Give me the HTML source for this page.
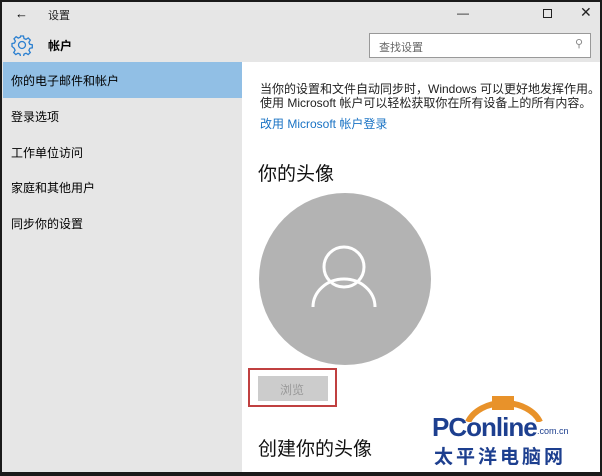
<!DOCTYPE html>
<html><head><meta charset="utf-8"><style>
*{margin:0;padding:0;box-sizing:border-box}
body{width:602px;height:476px;overflow:hidden;background:#1a1a1a;font-family:"Liberation Sans","Noto Sans CJK SC",sans-serif;position:relative}
#w{position:absolute;left:2px;top:2px;width:598px;height:470px;background:#fff;overflow:hidden}
#top{position:absolute;left:0;top:0;width:598px;height:60px;background:#e6e6e6}
#side{position:absolute;left:0;top:60px;width:240px;height:410px;background:#e6e6e6}
.t{position:absolute;font-size:12px;color:#000;white-space:nowrap}
.sel{position:absolute;left:1px;top:60px;width:239px;height:36px;background:#91bfe5}
#search{position:absolute;left:367px;top:31px;width:222px;height:25px;border:1px solid #999;background:#fff}
.c{font-size:12px;color:#222;line-height:16px}
</style></head><body>
<div id="w">
<div id="top"></div>
<div id="side"></div>
<div class="sel"></div>
<div class="t" style="left:13px;top:4px;font-size:13px">←</div>
<div class="t" style="left:46px;top:5px;font-size:11px;color:#222">设置</div>
<svg style="position:absolute;left:9px;top:32px" width="22" height="22" viewBox="0 0 22 22"><g fill="none" stroke="#2a7fd0" stroke-width="1.3"><circle cx="11" cy="11" r="3.5"/><path d="M9.5 2h3l.5 2.5 2 .9 2.2-1.4 2.1 2.1-1.4 2.2.9 2 2.5.5v3l-2.5.5-.9 2 1.4 2.2-2.1 2.1-2.2-1.4-2 .9-.5 2.5h-3l-.5-2.5-2-.9-2.2 1.4-2.1-2.1 1.4-2.2-.9-2L1 12.5v-3l2.5-.5.9-2L3 4.8 5.1 2.7l2.2 1.4 2-.9z"/></g></svg>
<div class="t" style="left:46px;top:35px;font-size:12px;font-weight:bold">帐户</div>
<div class="t" style="left:455px;top:4px;font-size:12px;color:#222">—</div>
<div style="position:absolute;left:541px;top:7px;width:9px;height:9px;border:1px solid #222"></div>
<div class="t" style="left:578px;top:2px;font-size:14px;color:#222">✕</div>
<div id="search"><span class="t" style="left:9px;top:5px;color:#666;font-size:11px">查找设置</span><span class="t" style="left:205px;top:3px;color:#888;font-size:11px">⚲</span></div>
<div class="t" style="left:9px;top:70px">你的电子邮件和帐户</div>
<div class="t" style="left:9px;top:106px">登录选项</div>
<div class="t" style="left:9px;top:142px">工作单位访问</div>
<div class="t" style="left:9px;top:177px">家庭和其他用户</div>
<div class="t" style="left:9px;top:213px">同步你的设置</div>
<div class="t c" style="left:258px;top:79px">当你的设置和文件自动同步时，Windows 可以更好地发挥作用。</div>
<div class="t c" style="left:258px;top:93px">使用 Microsoft 帐户可以轻松获取你在所有设备上的所有内容。</div>
<div class="t c" style="left:258px;top:114px;color:#1a73c4">改用 Microsoft 帐户登录</div>
<div class="t" style="left:256px;top:157px;font-size:19px;color:#111">你的头像</div>
<svg style="position:absolute;left:255px;top:189px" width="176" height="176" viewBox="0 0 176 176"><circle cx="88" cy="88" r="86" fill="#b3b3b3"/><g fill="none" stroke="#fff" stroke-width="3"><circle cx="87" cy="76" r="20"/><path d="M56 116a31 28 0 0 1 62 0"/></g></svg>
<div style="position:absolute;left:246px;top:366px;width:89px;height:39px;border:2px solid #c04040"></div>
<div style="position:absolute;left:256px;top:374px;width:70px;height:25px;background:#ccc"></div>
<div class="t" style="left:278px;top:379px;color:#999">浏览</div>
<div class="t" style="left:256px;top:432px;font-size:19px;color:#111">创建你的头像</div>
<svg style="position:absolute;left:462px;top:388px" width="80" height="32" viewBox="0 0 80 32"><path d="M4 32A38 28 0 0 1 76 32" fill="none" stroke="#e8922a" stroke-width="6"/><rect x="28" y="6" width="22" height="14" fill="#e8922a"/></svg>
<div class="t" style="left:430px;top:410px;font-size:26px;color:#1d3f8f;letter-spacing:-1px;font-weight:bold">PConline</div>
<div class="t" style="left:535px;top:424px;font-size:9px;color:#1d3f8f">.com.cn</div>
<div class="t" style="left:432px;top:440px;font-size:19px;color:#1d3f8f;font-weight:bold;letter-spacing:3px">太平洋电脑网</div>
</div>
</body></html>
